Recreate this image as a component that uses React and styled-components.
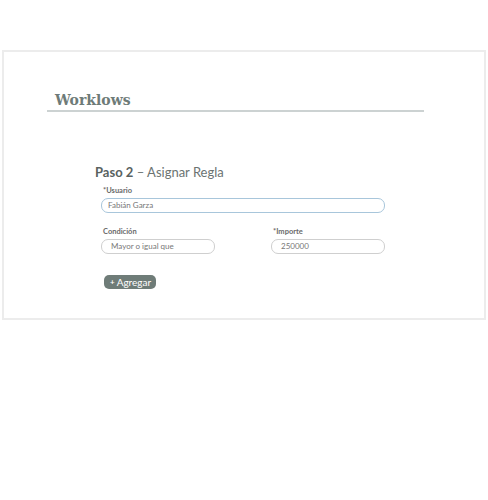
import React from "react"
import styled, { createGlobalStyle } from "styled-components"

const GlobalStyle = createGlobalStyle`
  body {
    margin: 0;
    background: #fff;
    font-family: "Lato", "Open Sans", sans-serif;
  }
`

const Page = styled.div`
  padding: 50px 2px 0 2px;
  width: 488px;
  box-sizing: border-box;
`

const Panel = styled.section`
  height: 270px;
  border: 2px solid #ececec;
  box-sizing: border-box;
  padding: 40px 60px 0 43px;
`

const Title = styled.h1`
  margin: 0;
  padding: 0 0 1px 8px;
  font-family: "DejaVu Serif", "Liberation Serif", serif;
  font-size: 14px;
  font-weight: 700;
  color: #6e7b78;
  border-bottom: 2px solid #ccd2d2;
  line-height: 17px;
`

const Form = styled.div`
  margin: 52px 0 0 48px;
  width: 290px;
`

const StepTitle = styled.h2`
  margin: 0 0 6px;
  font-size: 13px;
  font-weight: 400;
  color: #6b7372;
  line-height: 16px;

  strong {
    color: #59625f;
    font-weight: 700;
  }
`

const Row = styled.div`
  display: grid;
  grid-template-columns: ${(p) => p.$cols || "1fr"};
  column-gap: 56px;
  margin: 0 0 0 6px;
  padding-bottom: ${(p) => p.$gap || 0}px;
`

const Field = styled.label`
  display: flex;
  flex-direction: column;
  gap: 2px;
`

const Label = styled.span`
  font-size: 7.5px;
  font-weight: 700;
  color: #6a6a6a;
  line-height: 10px;
  padding-left: 2px;
`

const Input = styled.div`
  height: 15px;
  box-sizing: border-box;
  border: 1px solid ${(p) => (p.$active ? "#a8c6db" : "#cfcfcf")};
  border-radius: 7px;
  padding: 0 ${(p) => (p.$active ? 6 : 9)}px;
  font-size: 8px;
  line-height: 13px;
  color: #777;
`

const Actions = styled.div`
  display: flex;
  padding-left: 9px;
`

const AddButton = styled.button`
  height: 14px;
  padding: 0 5px 0 6px;
  border: none;
  border-radius: 5px;
  background: #6f7c78;
  color: #fff;
  font-family: inherit;
  font-size: 10px;
  line-height: 14px;
  display: inline-flex;
  align-items: center;
  gap: 2px;

  span {
    font-size: 8px;
    font-weight: 700;
  }
`

const App = () => {
  return (
    <Page>
      <GlobalStyle />
      <Panel>
        <Title>Worklows</Title>
        <Form>
          <StepTitle>
            <strong>Paso 2</strong> – Asignar Regla
          </StepTitle>
          <Row $gap={14}>
            <Field>
              <Label>*Usuario</Label>
              <Input $active>Fabián Garza</Input>
            </Field>
          </Row>
          <Row $cols="114px 114px" $gap={21}>
            <Field>
              <Label>Condición</Label>
              <Input>Mayor o igual que</Input>
            </Field>
            <Field>
              <Label>*Importe</Label>
              <Input>250000</Input>
            </Field>
          </Row>
          <Actions>
            <AddButton>
              <span>+</span>Agregar
            </AddButton>
          </Actions>
        </Form>
      </Panel>
    </Page>
  )
}

export default App
